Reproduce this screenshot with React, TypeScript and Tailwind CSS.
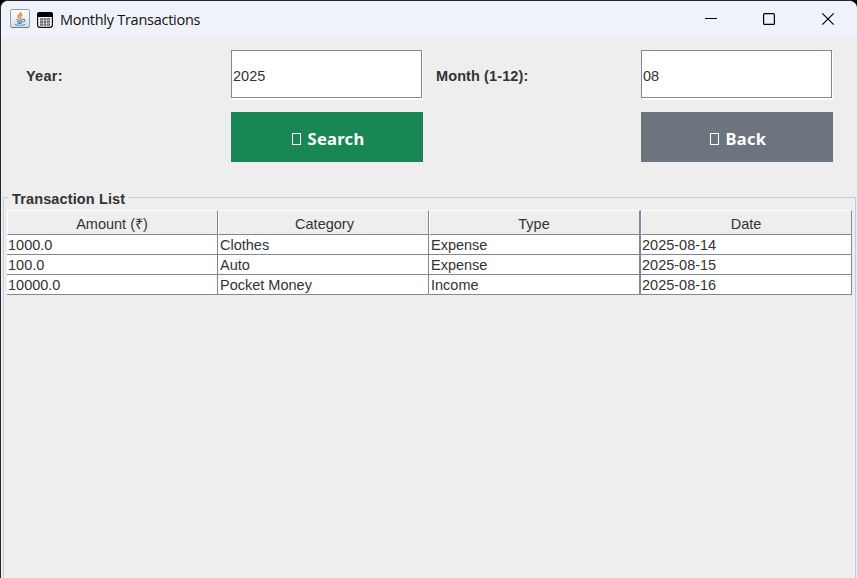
import React from "react";

const COLUMNS = ["Amount (₹)", "Category", "Type", "Date"];
const ROWS = [
  ["1000.0", "Clothes", "Expense", "2025-08-14"],
  ["100.0", "Auto", "Expense", "2025-08-15"],
  ["10000.0", "Pocket Money", "Income", "2025-08-16"],
];
const GRID = "grid grid-cols-[211px_211px_212px_211px]";

function JavaIcon() {
  return (
    <svg width="20" height="20" viewBox="0 0 20 20" fill="none">
      <defs>
        <linearGradient id="tile" x1="0" y1="0" x2="0" y2="1">
          <stop offset="0" stopColor="#ffffff" />
          <stop offset="1" stopColor="#d6dde3" />
        </linearGradient>
      </defs>
      <rect x=".5" y=".5" width="19" height="18" rx="1.5" fill="url(#tile)" stroke="#8fa3b3" />
      <path d="M1 18.5h18" stroke="#5f7f9b" />
      <path d="M10.7 3c1 2-3 2.700-2.600 4.600.2 1 1.200 1.400 1.300 2.100M12.200 5.500c-2 1-2.300 1.700-1.500 2.600.4.5.1 1.200-.4 1.600" stroke="#e8883a" strokeWidth="1.500" />
      <path d="M6.300 10.500c1.500.8 5 .7 6.700.1M7 12.400c1.500.6 4 .6 5.500 0M7.500 14c1.300.5 3 .5 4.300 0M13 10.500c2.600-.4 2.400 1.900.3 2.400" stroke="#4f7fa3" strokeWidth="1.100" />
      <path d="M5 14.900c-1 1.700 9 1.900 10.300.2" stroke="#6f94b0" strokeWidth="1.100" />
    </svg>
  );
}

function CalendarIcon() {
  return (
    <svg width="16" height="16" viewBox="0 0 16 16">
      <rect x=".6" y=".6" width="14.800" height="14.800" rx="2.400" fill="#f4f5f7" stroke="#111" strokeWidth="1.200" />
      <path d="M0 5V2.500A2.500 2.500 0 0 1 2.500 0h11A2.500 2.500 0 0 1 16 2.500V5z" fill="#000" />
      <g fill="none" stroke="#555" strokeWidth=".9">
        <path d="M3.500 6.500h2v1.700h-2zM7 6.500h2v1.700H7zM10.500 6.500h2v1.700h-2zM3.500 9.300h2V11h-2zM7 9.300h2V11H7zM10.500 9.300h2V11h-2zM3.500 12h2v1.400h-2zM7 12h2v1.400H7zM10.500 12h2v1.400h-2z" />
      </g>
    </svg>
  );
}

function Field({ value }: { value: string }) {
  return (
    <div className="flex h-12 w-[191px] items-center border border-[#7a8a99] bg-white pt-1 pl-[1px] leading-5 shadow-[1px_1px_0_#fff,1px_2px_0_#fff]">
      {value}
    </div>
  );
}

function ActionButton({ label, color }: { label: string; color: string }) {
  return (
    <button
      className={`flex h-[50px] w-[192px] items-center justify-center gap-[7px] pt-1 pl-[2px] font-['Noto_Sans',sans-serif] text-[16.5px] font-bold tracking-[0.3px] text-white ${color}`}
    >
      <span className="mb-px h-3 w-[9px] border border-white" />
      <span>{label}</span>
    </button>
  );
}

export default function App() {
  return (
    <div className="h-[578px] w-[857px] overflow-hidden bg-black">
      <div className="flex h-[578px] flex-col overflow-hidden rounded-t-[8px] border-t border-l border-[#29282b] bg-[#eeeeee] font-['Liberation_Sans',Arial,sans-serif] text-[14.5px] text-[#333333]">
        <header className="flex h-[37px] shrink-0 items-center bg-[#eff3f9] pl-[9px]">
          <div className="mb-px"><JavaIcon /></div>
          <div className="ml-[7px]"><CalendarIcon /></div>
          <h1 className="ml-[7px] font-['Open_Sans',sans-serif] text-[14.5px] tracking-[-0.27px] text-[#111]">Monthly Transactions</h1>
          <svg className="mr-[22px] mb-[2px] ml-auto" width="131" height="14" viewBox="0 0 131 14" fill="none" stroke="#000" strokeWidth="1.200">
            <path d="M1 6.500h12" />
            <rect x="59.600" y="1.600" width="10.800" height="10.800" rx="1" />
            <path d="M118.300 1.300l11.400 11.400M129.700 1.300l-11.400 11.400" />
          </svg>
        </header>

        <section className="grid grid-cols-[205px_205px_205px_192px] grid-rows-[48px_50px] gap-y-[14px] pt-3 pl-[25px]">
          <label className="pt-[18px] leading-4 font-bold tracking-[0.25px]">Year:</label>
          <Field value="2025" />
          <label className="pt-[18px] leading-4 font-bold tracking-[0.1px]">Month (1-12):</label>
          <Field value="08" />
          <div />
          <ActionButton label="Search" color="bg-[#198754]" />
          <div />
          <ActionButton label="Back" color="bg-[#6c757d]" />
        </section>

        <fieldset className="mt-[26px] mr-px ml-[2px] min-h-0 flex-1 border border-b-0 border-[#b8cfe5] pl-[3px]">
          <legend className="ml-[1px] h-[18px] px-1 leading-[22px] font-bold tracking-[0.13px]">Transaction List</legend>
          <div className="mt-1 w-[845px]">
            <div className={`${GRID} h-[25px]`}>
              {COLUMNS.map((name, i) => (
                <div
                  key={name}
                  className={`h-[25px] border-t border-r border-b border-l border-t-white border-r-[#7a8a99] border-b-[#7a8a99] border-l-white pt-[4px] text-center leading-[19px] ${i === 2 ? "border-r-2" : ""} ${i === 1 ? "pl-[2px]" : "pr-px"}`}
                >
                  {name}
                </div>
              ))}
            </div>
            {ROWS.map((row) => (
              <div key={row[3]} className={`${GRID} h-5`}>
                {row.map((cell, i) => (
                  <div
                    key={i}
                    className={`border-b border-[#7a8a99] bg-white pt-px leading-[18px] ${i === 0 || i === 3 ? "pl-px" : "pl-[2px]"} ${i === 2 ? "border-r-2" : "border-r"}`}
                  >
                    {cell}
                  </div>
                ))}
              </div>
            ))}
          </div>
        </fieldset>
      </div>
    </div>
  );
}
